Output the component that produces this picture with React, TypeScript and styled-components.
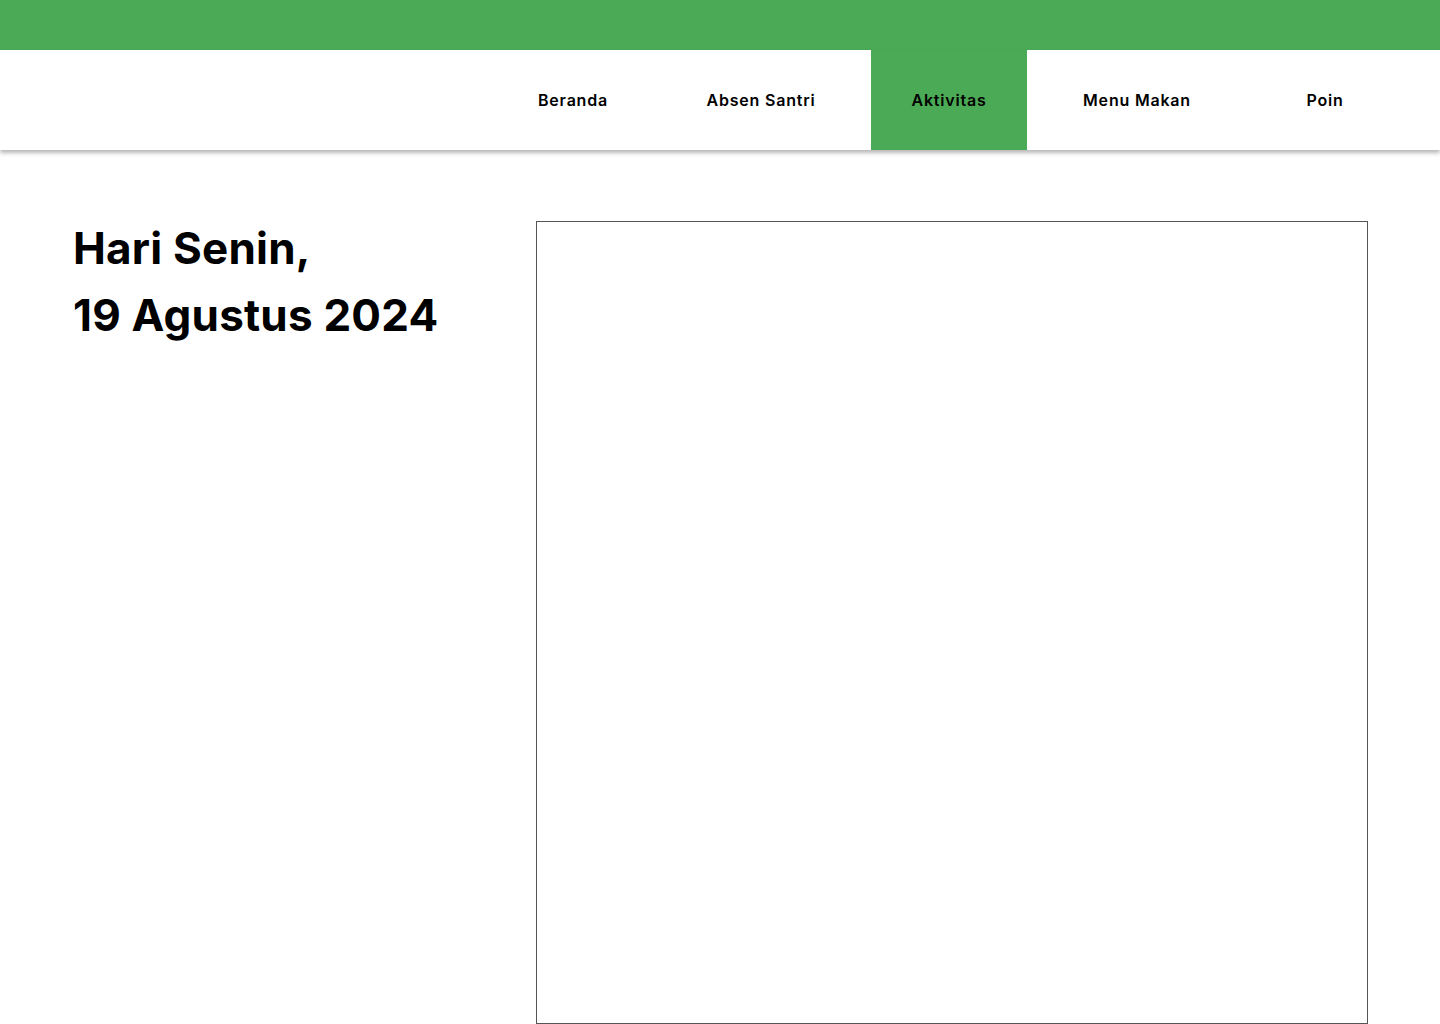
import React from "react";
import styled, { createGlobalStyle } from "styled-components";

const Global = createGlobalStyle`
  html, body { margin: 0; padding: 0; background: #ffffff; }
  body { font-family: "Inter", "Liberation Sans", sans-serif; color: #000; }
  * { box-sizing: border-box; }
`;

const TopBar = styled.div`
  height: 50px;
  background: #4baa55;
`;

const NavBar = styled.nav`
  height: 100px;
  background: #ffffff;
  box-shadow: 0 3px 4px rgba(0, 0, 0, 0.28);
  display: flex;
  justify-content: flex-end;
  padding-right: 21px;
  position: relative;
  z-index: 1;
`;

const NavList = styled.ul`
  list-style: none;
  margin: 0;
  padding: 0;
  display: grid;
  grid-template-columns: repeat(5, 188px);
`;

const NavItem = styled.li`
  display: flex;
  justify-content: center;
`;

const NavLink = styled.a<{ $active?: boolean }>`
  display: flex;
  align-items: center;
  height: 100px;
  padding: 0 40px;
  font-size: 16px;
  font-weight: 600;
  letter-spacing: 0.8px;
  white-space: nowrap;
  color: #000;
  text-decoration: none;
  background: ${(p) => (p.$active ? "#4baa55" : "transparent")};
`;

const Main = styled.main`
  display: flex;
  align-items: flex-start;
  padding: 71px 72px 0 73px;
`;

const DateBlock = styled.div`
  width: 463px;
  flex-shrink: 0;
  margin-top: -6px;
`;

const DateLine = styled.h1`
  margin: 0;
  font-size: 44px;
  font-weight: 700;
  line-height: 67px;
  letter-spacing: 0.2px;
  white-space: nowrap;
`;

const Panel = styled.section`
  flex: 1;
  height: 803px;
  border: 1px solid #555555;
`;

const items = ["Beranda", "Absen Santri", "Aktivitas", "Menu Makan", "Poin"];

export default function App() {
  return (
    <>
      <Global />
      <TopBar />
      <NavBar>
        <NavList>
          {items.map((it) => (
            <NavItem key={it}>
              <NavLink href="#" $active={it === "Aktivitas"}>
                {it}
              </NavLink>
            </NavItem>
          ))}
        </NavList>
      </NavBar>
      <Main>
        <DateBlock>
          <DateLine>Hari Senin,</DateLine>
          <DateLine>19 Agustus 2024</DateLine>
        </DateBlock>
        <Panel />
      </Main>
    </>
  );
}
